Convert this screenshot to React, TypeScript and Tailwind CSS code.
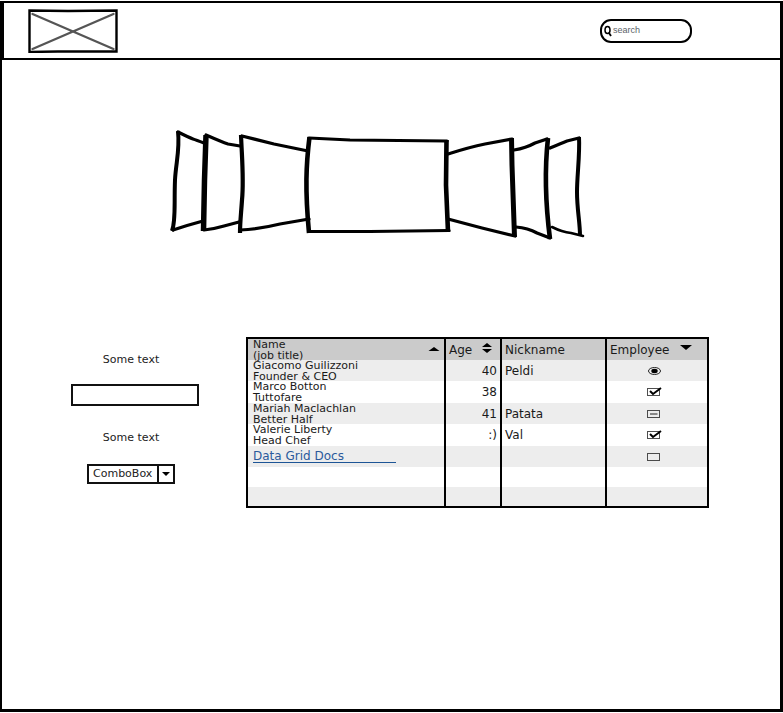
import type { ReactNode } from "react";

type Mark = "radio" | "checked" | "mixed" | "empty";

interface Person {
  name: string;
  title?: string;
  age: string;
  nickname: string;
  mark: Mark;
}

const people: Person[] = [
  { name: "Giacomo Guilizzoni", title: "Founder & CEO", age: "40", nickname: "Peldi", mark: "radio" },
  { name: "Marco Botton", title: "Tuttofare", age: "38", nickname: "", mark: "checked" },
  { name: "Mariah Maclachlan", title: "Better Half", age: "41", nickname: "Patata", mark: "mixed" },
  { name: "Valerie Liberty", title: "Head Chef", age: ":)", nickname: "Val", mark: "checked" },
];

function Logo() {
  return (
    <svg className="h-11 w-[90px]" viewBox="0 0 90 44" fill="none" role="img" aria-label="Logo">
      <path d="M1.5 1.5 L40 2 L88.5 1.5 L88.5 42.5 L30 42.5 L1.5 43 Z" stroke="#000" strokeWidth="2.4" />
      <path d="M4.5 5 L85.5 40 M85.5 5 L4.5 40" stroke="#555" strokeWidth="2.3" strokeLinecap="round" />
    </svg>
  );
}

function Carousel() {
  return (
    <svg
      className="h-[110px] w-[415px]"
      viewBox="170 130 415 110"
      fill="none"
      stroke="#000"
      strokeLinejoin="round"
      role="img"
      aria-label="Cover flow"
    >
      <g strokeWidth="3.2" strokeLinecap="round">
        <path d="M178 132 Q190 138 193 139 T204 143" />
        <path d="M173 230 Q188 225 203 221" />
        <path d="M206 135 Q222 142 228 144 L240 146" />
        <path d="M204 230 Q214 229 224 226 L239 222" />
        <path d="M242 136 L274 144 L308 151" />
        <path d="M240 230 Q260 229 280 224 L309 219" />
        <path d="M309 138 L350 140 L447 141" />
        <path d="M309 231.5 L370 231.5 L449 230.5" />
        <path d="M448 154 Q470 147 485 144 L512 139" />
        <path d="M448 219 L482 228 L515 236" />
        <path d="M514 150 Q526 148 535 143 L547 139" />
        <path d="M516 227 Q528 228 537 233 L550 238" />
        <path d="M550 148 Q562 143 567 141 L579 138" />
        <path d="M552 227 Q562 232 571 233 L583 236" strokeWidth="2.6" />
      </g>
      <g strokeWidth="4.6">
        <path d="M178 131 C180 150 176 162 175 180 C174 205 176 220 172 231" strokeWidth="4" />
        <path d="M241 135 C242 160 244 180 242 200 C241 215 240 222 240 233" strokeWidth="4.2" />
        <path d="M309.5 137 C306 165 305 190 309 233" />
        <path d="M446.5 140 L446 185 L448 232" />
        <path d="M511.5 138 L512 165 L514.5 237" strokeWidth="5" />
        <path d="M548 138 C545 165 545 200 550 239" />
        <path d="M579 137 C580 155 577 175 577 192 C577 210 580 222 580 236" strokeWidth="4" />
      </g>
      <path d="M206 135 L204.500 180 L203.500 231" strokeWidth="5.5" />
    </svg>
  );
}

function Arrows({ up, down }: { up?: boolean; down?: boolean }) {
  return (
    <svg className="h-[10px] w-3 shrink-0" viewBox="0 0 12 10" aria-hidden="true">
      {up && down && <path d="M6 0 L11 4 H1 Z M1 6 H11 L6 10 Z" fill="#000" />}
      {up && !down && <path d="M6 2 L11.5 6 H0.5 Z" fill="#000" />}
      {down && !up && <path d="M0 2 H12 L6 7 Z" fill="#000" />}
    </svg>
  );
}

function EmployeeMark({ mark, label }: { mark: Mark; label: string }) {
  return (
    <label className="relative mr-[7px] block h-3 w-4">
      <input
        type={mark === "radio" ? "radio" : "checkbox"}
        aria-label={label}
        defaultChecked={mark === "radio" || mark === "checked"}
        ref={(el) => {
          if (el) el.indeterminate = mark === "mixed";
        }}
        className="absolute inset-0 m-0 h-full w-full appearance-none"
      />
      <svg className="pointer-events-none absolute inset-0 h-3 w-4" viewBox="0 0 16 12" fill="none" stroke="#222" aria-hidden="true">
        {mark === "radio" ? (
          <>
            <ellipse cx="8.5" cy="6" rx="6" ry="3.5" />
            <ellipse cx="8.5" cy="6" rx="3.2" ry="2.2" fill="#000" stroke="none" />
          </>
        ) : (
          <rect x="1.5" y="2.5" width="12" height="7" strokeOpacity="0.8" />
        )}
        {mark === "checked" && <path d="M4 5 L7 8 L15 2" stroke="#000" strokeWidth="2" />}
        {mark === "mixed" && <path d="M4 6 H11.5" />}
      </svg>
    </label>
  );
}

function HeaderButton({ children }: { children: ReactNode }) {
  return <button className="flex h-[21px] w-full items-center text-left">{children}</button>;
}

function DataGrid() {
  const cell = "border-x-2 border-black px-[3px] py-0";
  const nameCell = "border-x-2 border-black py-0 pr-1 pl-[5px] text-[11px] leading-[11px]";
  return (
    <table className="w-full min-w-0 flex-1 table-fixed border-collapse border-2 border-black text-[12px] leading-[14px] text-[#1a1a1a]">
      <colgroup>
        <col />
        <col className="w-14" />
        <col className="w-[105px]" />
        <col className="w-[102px]" />
      </colgroup>
      <thead>
        <tr className="bg-[#cbcbcb]">
          <th className={`${nameCell} font-normal`}>
            <HeaderButton>
              <span className="flex-1">
                Name
                <br />
                (job title)
              </span>
              <Arrows up />
            </HeaderButton>
          </th>
          <th className={`${cell} font-normal`}>
            <HeaderButton>
              <span className="flex-1">Age</span>
              <span className="mr-1 flex pb-1">
                <Arrows up down />
              </span>
            </HeaderButton>
          </th>
          <th className={`${cell} font-normal`}>
            <HeaderButton>Nickname</HeaderButton>
          </th>
          <th className={`${cell} font-normal`}>
            <HeaderButton>
              <span className="flex-1">Employee</span>
              <span className="mr-3 flex pb-1">
                <Arrows down />
              </span>
            </HeaderButton>
          </th>
        </tr>
      </thead>
      <tbody>
        {people.map((p) => (
          <tr key={p.name} className="group odd:bg-[#ededed]">
            <td className={nameCell}>
              <div className="flex h-[22px] items-center whitespace-nowrap group-odd:h-[21px]">
                <div>
                  {p.name}
                  <br />
                  {p.title}
                </div>
              </div>
            </td>
            <td className={`${cell} text-right`}>{p.age}</td>
            <td className={cell}>{p.nickname}</td>
            <td className={cell}>
              <div className="flex justify-center">
                <EmployeeMark mark={p.mark} label={p.name} />
              </div>
            </td>
          </tr>
        ))}
        <tr className="bg-[#ededed]">
          <td className="h-[21px] border-x-2 border-black py-0 pr-1 pl-[5px]">
            <a href="#docs" className="block w-[143px] border-b border-[#1d5596] leading-[11px] text-[#2a5a9c]">
              Data Grid Docs
            </a>
          </td>
          <td className={cell} />
          <td className={cell} />
          <td className={cell}>
            <div className="flex justify-center">
              <EmployeeMark mark="empty" label="Data Grid Docs" />
            </div>
          </td>
        </tr>
        {["bg-white", "bg-[#ededed]"].map((shade) => (
          <tr key={shade} className={shade}>
            <td className={`${cell} h-5`} />
            <td className={cell} />
            <td className={cell} />
            <td className={cell} />
          </tr>
        ))}
      </tbody>
    </table>
  );
}

export default function App() {
  return (
    <div className="flex min-h-screen bg-white pt-px pb-px font-['DejaVu_Sans',sans-serif] text-[#222]">
      <div className="flex flex-1 flex-col border-r-[3px] border-b-[3px] border-l-2 border-black">
        <header className="flex h-[59px] items-center justify-between border-y-2 border-l-2 border-black pr-[88px] pl-6">
          <Logo />
          <label className="flex h-6 w-[92px] items-center rounded-[11px] border-2 border-black pl-[2px]">
            <svg className="h-3 w-2 shrink-0" viewBox="0 0 8 12" fill="none" stroke="#000" aria-hidden="true">
              <ellipse cx="3.5" cy="5" rx="2.5" ry="3.6" strokeWidth="1.5" />
              <path d="M5 8 L7 11" strokeWidth="1.8" />
            </svg>
            <input
              type="search"
              aria-label="Search"
              placeholder="search"
              className="ml-px w-full min-w-0 bg-transparent font-['Liberation_Sans',sans-serif] text-[9px] outline-none placeholder:text-[#5b5f68]"
            />
          </label>
        </header>

        <main className="flex flex-1 flex-col">
          <div className="flex justify-center pt-[70px] pr-[27px]">
            <Carousel />
          </div>

          <div className="mt-[97px] flex items-start gap-[47px] pr-[71px] pl-[69px]">
            <form className="flex w-32 shrink-0 flex-col items-center pt-[15px] text-[11px]">
              <label htmlFor="first" className="mr-2 leading-4">
                Some text
              </label>
              <input
                id="first"
                type="text"
                className="mt-4 h-[22px] w-full border-2 border-[#111] px-1 outline-none"
              />
              <label htmlFor="second" className="mt-6 mr-2 leading-4">
                Some text
              </label>
              <div className="relative mt-[18px] mr-2 flex h-5 w-[88px] border-2 border-[#111]">
                <select id="second" className="w-full appearance-none bg-white pl-1 text-[11px] leading-4 outline-none">
                  <option>ComboBox</option>
                </select>
                <span className="pointer-events-none absolute inset-y-0 right-0 flex w-4 items-center justify-center border-l-2 border-[#111] bg-white">
                  <svg className="h-1 w-2" viewBox="0 0 8 4" aria-hidden="true">
                    <path d="M0 0 H8 L4 4 Z" fill="#000" />
                  </svg>
                </span>
              </div>
            </form>
            <DataGrid />
          </div>
        </main>
      </div>
    </div>
  );
}
